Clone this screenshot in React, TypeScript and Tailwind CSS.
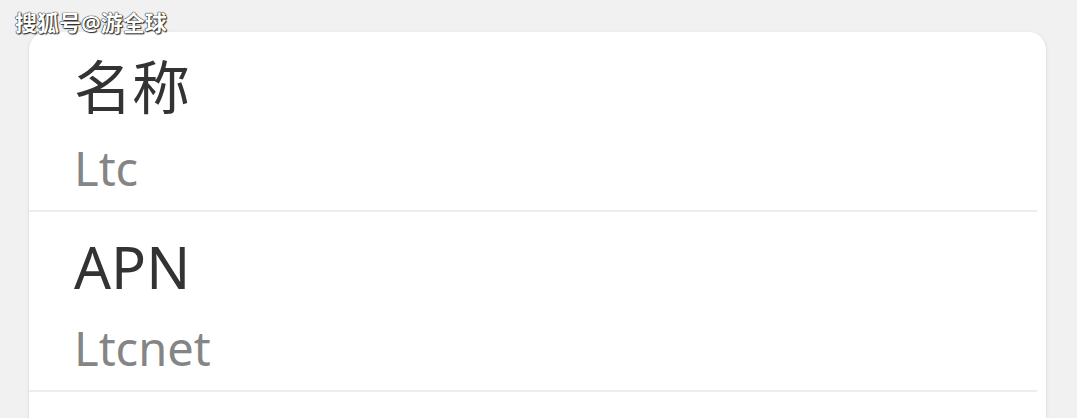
const rows = [
  { label: "名称", value: "Ltc" },
  { label: "APN", value: "Ltcnet" },
  { label: "代理", value: "未设置" },
];

function SettingRow({ label, value }: { label: string; value: string }) {
  return (
    <div className="flex flex-col pl-[45px] pt-[21px] pb-[14px] border-b-2 border-[#ededed] mr-[9px]">
      <span className="text-[58px] leading-[68px] text-[#333333]">{label}</span>
      <span className="mt-[19px] text-[47px] leading-[56px] text-[#858585]">{value}</span>
    </div>
  );
}

export default function App() {
  return (
    <div
      className="relative h-[418px] overflow-hidden bg-[#f1f1f1] pt-[32px] pl-[28px] pr-[30px]"
      style={{ fontFamily: '"Noto Sans", "Noto Sans CJK SC", sans-serif' }}
    >
      {/* watermark */}
      <div className="absolute left-[15px] top-[8px] text-[22px] leading-[28px] font-bold text-white [text-shadow:0_0_1px_#000,0_0_1px_#000,1px_1px_1px_#333]">
        搜狐号@游全球
      </div>

      <div className="bg-white rounded-t-[18px] border-l border-r border-[#e4e4e4] shadow-[0_0_4px_rgba(0,0,0,0.04)]">
        {rows.map((r) => (
          <SettingRow key={r.label} label={r.label} value={r.value} />
        ))}
      </div>
    </div>
  );
}
